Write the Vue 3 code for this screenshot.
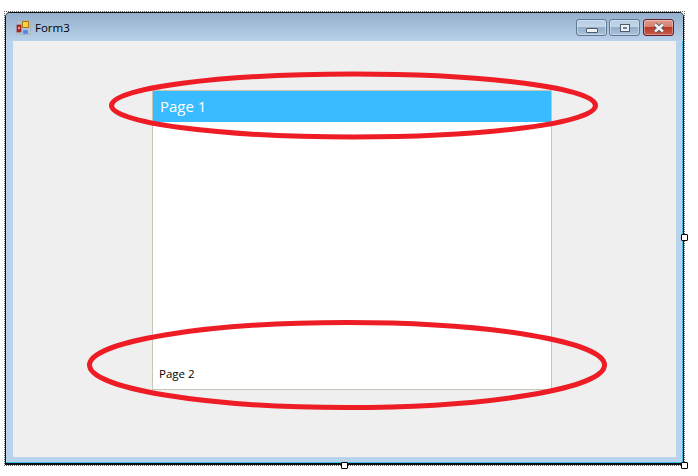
<template>
  <div class="stage">
    <div class="selection">
      <div class="window">
        <div class="titlebar">
          <svg class="form-icon" width="16" height="16" viewBox="0 0 16 16">
            <rect x="0.5" y="0.5" width="14" height="14" fill="#b9c6d6" fill-opacity="0.5" stroke="#a9a9a9" stroke-opacity="0.5" />
            <rect x="1" y="5" width="4" height="7" fill="#b5262a" stroke="#7d1c1c" stroke-width="0.6" />
            <rect x="2" y="7" width="2" height="2" fill="#ef9a9a" />
            <rect x="6.5" y="1.5" width="6" height="6" fill="#f7cf4d" stroke="#a97b12" />
            <rect x="7" y="10" width="5" height="4" fill="#4f86dc" stroke="#8cb0e6" stroke-width="0.6" />
          </svg>
          <span class="title">Form3</span>
          <div class="controls">
            <div class="ctl">
              <span class="min-glyph"></span>
            </div>
            <div class="ctl">
              <span class="max-glyph"></span>
            </div>
            <div class="ctl close">
              <svg width="16" height="10" viewBox="0 0 16 10">
                <path d="M4 1.5 L12 8.5 M12 1.5 L4 8.5" stroke="#49505c" stroke-width="4" />
                <path d="M4 1.5 L12 8.5 M12 1.5 L4 8.5" stroke="#f1f3f6" stroke-width="2.6" />
              </svg>
            </div>
          </div>
        </div>
        <div class="client">
          <div class="panel">
            <div class="page active">Page 1</div>
            <div class="spacer"></div>
            <div class="page">Page 2</div>
          </div>
        </div>
      </div>
    </div>
    <span class="handle h-right"></span>
    <span class="handle h-bottom"></span>
    <span class="handle h-corner"></span>
    <svg class="marks" width="698" height="476" viewBox="0 0 698 476">
      <ellipse cx="353.5" cy="105.5" rx="242" ry="31.5" />
      <ellipse cx="347" cy="365" rx="257.5" ry="42.5" />
    </svg>
  </div>
</template>

<script setup>
</script>

<style>
body {
  background: #fff;
}
</style>

<style scoped>
.stage {
  position: relative;
  width: 698px;
  height: 476px;
  padding: 11px 0 0 4px;
  box-sizing: border-box;
  background: #fff;
  overflow: hidden;
}
.selection {
  width: 681px;
  height: 455px;
  box-sizing: border-box;
  border: 1px dotted #666;
}
.window {
  height: 100%;
  box-sizing: border-box;
  display: flex;
  flex-direction: column;
  border: 1px solid #111;
  border-bottom-width: 2px;
  border-radius: 5px 5px 0 0;
  background: #b9d3ec;
  box-shadow: inset -1px 0 0 #3fc0ea, inset 0 -1px 0 #3fc0ea;
  padding: 0 7px 6px 7px;
}
.titlebar {
  height: 28px;
  margin: 0 -7px;
  padding: 0 9px 0 10px;
  flex: none;
  display: flex;
  align-items: center;
  background: linear-gradient(#95b0cd, #b9d1ea);
  border-radius: 4px 4px 0 0;
  font-family: "Open Sans", "Noto Sans", sans-serif;
  font-size: 11.5px;
  color: #000;
}
.form-icon {
  flex: none;
  margin-top: 2px;
}
.title {
  margin-left: 3px;
  margin-top: 1px;
}
.controls {
  margin-left: auto;
  display: flex;
  gap: 2px;
  margin-top: 1px;
}
.ctl {
  width: 31px;
  height: 17px;
  box-sizing: border-box;
  display: flex;
  align-items: center;
  justify-content: center;
  border: 1px solid #5f7891;
  border-radius: 3px;
  background: linear-gradient(#b6cde3 0%, #c2d6ea 45%, #94afc9 50%, #a9c2da 100%);
  box-shadow: inset 0 0 0 1px rgba(255, 255, 255, 0.35);
}
.close {
  border-color: #5f1f2a;
  background: linear-gradient(#dd9a8c 0%, #d8806f 45%, #b83b2a 50%, #c7594a 100%);
  margin-left: 1px;
}
.min-glyph {
  width: 10px;
  height: 3px;
  margin-top: 5px;
  background: #eef1f5;
  border: 1px solid #4d5a6b;
  border-radius: 1px;
}
.max-glyph {
  width: 4px;
  height: 2px;
  border: 2px solid #eef1f5;
  outline: 1px solid #4d5a6b;
  background: #6b83a0;
  box-sizing: content-box;
}
.client {
  flex: 1;
  background: #efefef;
  padding: 49px 0 0 139px;
}
.panel {
  width: 400px;
  height: 300px;
  box-sizing: border-box;
  display: flex;
  flex-direction: column;
  background: #fff;
  border: 1px solid #c6c6b8;
  font-family: "Open Sans", "Noto Sans", sans-serif;
}
.page {
  flex: none;
  height: 31px;
  box-sizing: border-box;
  display: flex;
  align-items: center;
  padding-left: 6px;
  font-size: 11.5px;
  color: #000;
}
.page.active {
  background: #38bbff;
  color: #fff;
  font-size: 15px;
  padding-left: 7px;
  padding-bottom: 1px;
}
.spacer {
  flex: 1;
}
.handle {
  position: absolute;
  width: 7px;
  height: 7px;
  box-sizing: border-box;
  background: #fff;
  border: 1px solid #000;
  border-radius: 1px;
}
.h-right {
  left: 681px;
  top: 234px;
}
.h-bottom {
  left: 341px;
  top: 462px;
}
.h-corner {
  left: 681px;
  top: 462px;
}
.marks {
  position: absolute;
  left: 0;
  top: 0;
  pointer-events: none;
}
.marks ellipse {
  fill: none;
  stroke: #ee1c25;
  stroke-width: 5;
}
</style>
